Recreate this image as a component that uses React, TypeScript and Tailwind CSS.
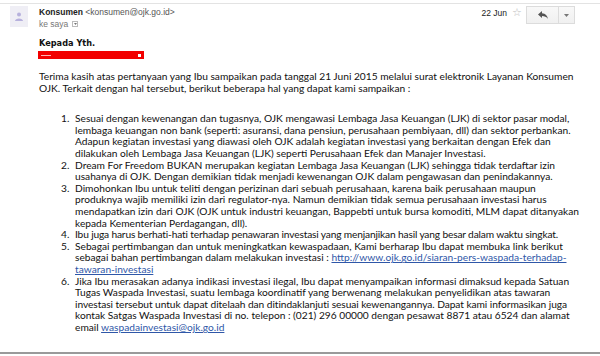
import React from "react";

const body = { fontFamily: "Lato, 'Open Sans', sans-serif" };
const ui = { fontFamily: "'Liberation Sans', Arial, sans-serif" };

function Link({ children }: { children: React.ReactNode }) {
  return <span className="text-[#2f57a8] underline">{children}</span>;
}

function Avatar() {
  return (
    <div className="w-[18px] h-[21px] bg-[#efeef5] flex items-center justify-center">
      <svg width="8" height="9" viewBox="0 0 8 9">
        <circle cx="4" cy="2.5" r="2" fill="#b7b1dd" />
        <path d="M0 9 C0 5.5 8 5.5 8 9 Z" fill="#b7b1dd" />
      </svg>
    </div>
  );
}

function ReplyButtons() {
  return (
    <div className="flex h-[18px] border border-[#dcdcdc] bg-gradient-to-b from-[#f8f8f8] to-[#f0f0f0]">
      <div className="w-[32px] flex items-center justify-center border-r border-[#dcdcdc]">
        <svg width="10" height="8" viewBox="0 0 10 8">
          <path d="M4 0 L0 3.5 L4 7 L4 5 C6.5 5 8.5 5.8 10 8 C9.4 4.8 7.5 2.6 4 2.2 Z" fill="#555" />
        </svg>
      </div>
      <div className="w-[15px] flex items-center justify-center">
        <svg width="5" height="3" viewBox="0 0 5 3">
          <path d="M0 0 H5 L2.5 3 Z" fill="#777" />
        </svg>
      </div>
    </div>
  );
}

// a few lines run wider in Lato than in the original font, so they get tightened
const tight = (text: string, cls: string) => <span className={cls}>{text}</span>;

const items: React.ReactNode[][] = [
  [
    "Sesuai dengan kewenangan dan tugasnya, OJK mengawasi Lembaga Jasa Keuangan (LJK) di sektor pasar modal,",
    "lembaga keuangan non bank (seperti: asuransi, dana pensiun, perusahaan pembiyaan, dll) dan sektor perbankan.",
    "Adapun kegiatan investasi yang diawasi oleh OJK adalah kegiatan investasi yang berkaitan dengan Efek dan",
    "dilakukan oleh Lembaga Jasa Keuangan (LJK) seperti Perusahaan Efek dan Manajer Investasi.",
  ],
  [
    "Dream For Freedom BUKAN merupakan kegiatan Lembaga Jasa Keuangan (LJK) sehingga tidak terdaftar izin",
    "usahanya di OJK. Dengan demikian tidak menjadi kewenangan OJK dalam pengawasan dan penindakannya.",
  ],
  [
    "Dimohonkan Ibu untuk teliti dengan perizinan dari sebuah perusahaan, karena baik perusahaan maupun",
    "produknya wajib memiliki izin dari regulator-nya. Namun demikian tidak semua perusahaan investasi harus",
    "mendapatkan izin dari OJK (OJK untuk industri keuangan, Bappebti untuk bursa komoditi, MLM dapat ditanyakan",
    "kepada Kementerian Perdagangan, dll).",
  ],
  [
    tight(
      "Ibu juga harus berhati-hati terhadap penawaran investasi yang menjanjikan hasil yang besar dalam waktu singkat.",
      "tracking-[-0.16px]"
    ),
  ],
  [
    "Sebagai pertimbangan dan untuk meningkatkan kewaspadaan, Kami berharap Ibu dapat membuka link berikut",
    <>
      sebagai bahan pertimbangan dalam melakukan investasi :{" "}
      <Link>http://www.ojk.go.id/siaran-pers-waspada-terhadap-</Link>
    </>,
    <Link>tawaran-investasi</Link>,
  ],
  [
    "Jika Ibu merasakan adanya indikasi investasi ilegal, Ibu dapat menyampaikan informasi dimaksud kepada Satuan",
    "Tugas Waspada Investasi, suatu lembaga koordinatif yang berwenang melakukan penyelidikan atas tawaran",
    tight(
      "investasi tersebut untuk dapat ditelaah dan ditindaklanjuti sesuai kewenangannya. Dapat kami informasikan juga",
      "tracking-[-0.06px]"
    ),
    "kontak Satgas Waspada Investasi di no. telepon : (021) 296 00000 dengan pesawat 8871 atau 6524 dan alamat",
    <>
      email <Link>waspadainvestasi@ojk.go.id</Link>
    </>,
  ],
];

export default function App() {
  return (
    <div className="w-[600px] h-[356px] bg-white overflow-hidden">
      <div className="h-[351px] border-t border-[#e3e3e3] border-b-2 border-b-[#9a9a9a] mt-[3px] box-border">
        {/* header */}
        <div className="flex pl-[10px] pr-[25px] pt-[2px]" style={ui}>
          <Avatar />
          <div className="ml-[11px] flex-1">
            <div className="text-[8.5px] leading-[12px] text-[#222]">
              <span className="font-bold">Konsumen</span>{" "}
              <span className="text-[#555]">&lt;konsumen@ojk.go.id&gt;</span>
            </div>
            <div className="flex items-center gap-[4px] text-[8.5px] leading-[12px] text-[#777]">
              ke saya
              <span className="w-[6px] h-[6px] border border-[#bbb] flex items-center justify-center">
                <svg width="3" height="2" viewBox="0 0 3 2">
                  <path d="M0 0 H3 L1.5 2 Z" fill="#777" />
                </svg>
              </span>
            </div>
          </div>
          <div className="flex items-start">
            <span className="text-[8.5px] leading-[12px] text-[#222] mt-[1px]">22 Jun</span>
            <span className="ml-[5px] text-[11px] leading-[12px] text-[#bdbdbd]">☆</span>
            <div className="ml-[4px]">
              <ReplyButtons />
            </div>
          </div>
        </div>

        {/* body */}
        <div className="pl-[39px] text-[#111]" style={body}>
          <div
            className="mt-[8px] text-[8.2px] font-bold leading-[11px] text-[#111]"
            style={{ fontFamily: "'DejaVu Sans', Verdana, sans-serif" }}
          >
            Kepada Yth.
          </div>
          <div className="mt-[2px] ml-[-1px] w-[106px] h-[8px] bg-[#f20000] flex items-center justify-between px-[3px]">
            <span className="w-[10px] h-[1px] bg-[#ffb3b3]" />
            <span className="w-[3px] h-[3px] bg-white" />
          </div>

          <p className="mt-[12px] text-[10.2px] leading-[11.6px] whitespace-nowrap">
            Terima kasih atas pertanyaan yang Ibu sampaikan pada tanggal 21 Juni 2015 melalui surat elektronik Layanan Konsumen
            <br />
            OJK. Terkait dengan hal tersebut, berikut beberapa hal yang dapat kami sampaikan :
          </p>

          <ol className="mt-[19px] text-[10.2px] leading-[11.6px] whitespace-nowrap">
            {items.map((lines, i) => (
              <li key={i} className="flex">
                <span className="w-[36px] pl-[22px]">{i + 1}.</span>
                <div>
                  {lines.map((l, j) => (
                    <div key={j}>{l}</div>
                  ))}
                </div>
              </li>
            ))}
          </ol>
        </div>
      </div>
    </div>
  );
}
